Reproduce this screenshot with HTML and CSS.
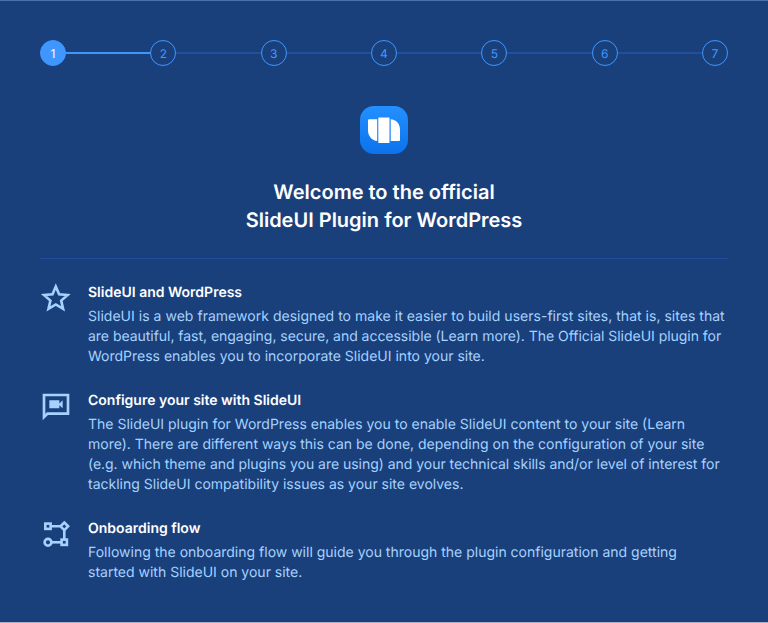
FILE: index.html
```html
<!DOCTYPE html>
<html lang="en">
<head>
<meta charset="utf-8">
<title>SlideUI Plugin for WordPress</title>
<link rel="stylesheet" href="styles.css">
</head>
<body>
<main class="wizard">
  <ol class="steps">
    <li class="step active">1</li>
    <li class="line current"></li>
    <li class="step">2</li>
    <li class="line"></li>
    <li class="step">3</li>
    <li class="line"></li>
    <li class="step">4</li>
    <li class="line"></li>
    <li class="step">5</li>
    <li class="line"></li>
    <li class="step">6</li>
    <li class="line"></li>
    <li class="step">7</li>
  </ol>
  <header class="intro">
    <svg class="logo" viewBox="0 0 48 48">
      <defs><linearGradient id="g" x1="0" y1="0" x2="0" y2="1"><stop offset="0" stop-color="#2490ff"/><stop offset="1" stop-color="#0b72ec"/></linearGradient></defs>
      <rect width="48" height="48" rx="14" fill="url(#g)"/>
      <path fill="#fff" d="M9 13.300H17.200V35C12 34.500 8 30 8 24.500V14.300Q8 13.300 9 13.300zM19 11.500H29Q29.500 11.500 29.500 12V36.500Q29.500 37 29 37H19Q18.300 37 18.300 36.500V12Q18.300 11.500 19 11.500zM30.700 13.300C36 13.500 40 18 40 23.500V34Q40 35 39 35H30.700z"/>
    </svg>
    <h1>Welcome to the official<br>SlideUI Plugin for WordPress</h1>
  </header>
  <section class="features">
    <article class="feature">
      <svg class="icon" viewBox="0 0 32 32"><path class="outline" d="M15.800 3.500l3.300 7.800 8.500.7-6.400 5.600 1.900 8.300-7.300-4.400-7.300 4.400 1.900-8.300L4 12l8.500-.7z"/></svg>
      <div>
        <h2>SlideUI and WordPress</h2>
        <p><span class="wide">SlideUI is a web framework designed to make it easier to build users-first sites, that is, sites that</span><br><span class="tight">are beautiful, fast, engaging, secure, and accessible (Learn more). The Official SlideUI plugin for</span><br>WordPress enables you to incorporate SlideUI into your site.</p>
      </div>
    </article>
    <article class="feature">
      <svg class="icon" viewBox="0 0 24 24"><path fill-rule="evenodd" d="M2 2h20v16H6l-4 4zM4 4v13.170L5.170 16H20V4zM7 7h7.500v2.300l2.500-2.300v6l-2.500-2.300V13H7z"/></svg>
      <div>
        <h2>Configure your site with SlideUI</h2>
        <p>The SlideUI plugin for WordPress enables you to enable SlideUI content to your site (Learn<br>more). There are different ways this can be done, depending on the configuration of your site<br><span class="tight">(e.g. which theme and plugins you are using) and your technical skills and/or level of interest for</span><br>tackling SlideUI compatibility issues as your site evolves.</p>
      </div>
    </article>
    <article class="feature">
      <svg class="icon" viewBox="0 0 32 32"><g class="outline" transform="translate(0 -.7)"><rect x="5.300" y="5.300" width="5.300" height="5.300"/><path d="M10.600 8h10M24.300 4.200l3.800 3.800-3.800 3.800-3.800-3.800zM24.300 11.800v9.500"/><rect x="21.600" y="21.300" width="5.300" height="5.300"/><circle cx="8" cy="24" r="3.400"/><path d="M11.400 24h10"/></g></svg>
      <div>
        <h2>Onboarding flow</h2>
        <p>Following the onboarding flow will guide you through the plugin configuration and getting<br>started with SlideUI on your site.</p>
      </div>
    </article>
  </section>
</main>
</body>
</html>
```
FILE: styles.css
```css
* { box-sizing: border-box; }
body { margin: 0; background: #1a407c; font-family: Inter, "Liberation Sans", sans-serif; color: #fff; text-rendering: geometricPrecision; }
h1, h2, p { margin: 0; }
.wizard { height: 623px; padding: 39px 40px 0; border-top: 1px solid #4c70a8; border-bottom: 1px solid #a3b3cc; }
.steps { display: flex; align-items: center; list-style: none; margin: 0; padding: 0; }
.step { display: flex; align-items: center; justify-content: center; width: 26px; height: 26px; flex: none; border: 1px solid #4096ff; border-radius: 50%; font-size: 12px; color: #4096ff; }
.step.active { background: #4096ff; color: #fff; }
.line { flex: 1; height: 2px; background: #224f9a; }
.line.current { background: #4096ff; }
.intro { display: flex; flex-direction: column; align-items: center; padding: 40px 0 24px; border-bottom: 1px solid #224f9a; }
.logo { width: 48px; height: 48px; }
h1 { margin-top: 24px; text-align: center; font-size: 20px; line-height: 28px; font-weight: 600; }
.features { display: flex; flex-direction: column; gap: 24px; padding-top: 24px; }
.feature { display: flex; gap: 16px; }
.icon { flex: none; width: 32px; height: 32px; fill: #a6d2ff; }
.outline { fill: none; stroke: #a6d2ff; stroke-width: 2.600; }
h2 { font-size: 14px; line-height: 20px; font-weight: 600; }
p { margin-top: 4px; font-size: 14px; line-height: 20px; color: #a6d2ff; white-space: nowrap; }
.wide { letter-spacing: 0.025px; }
.tight { letter-spacing: -0.03px; }
```
